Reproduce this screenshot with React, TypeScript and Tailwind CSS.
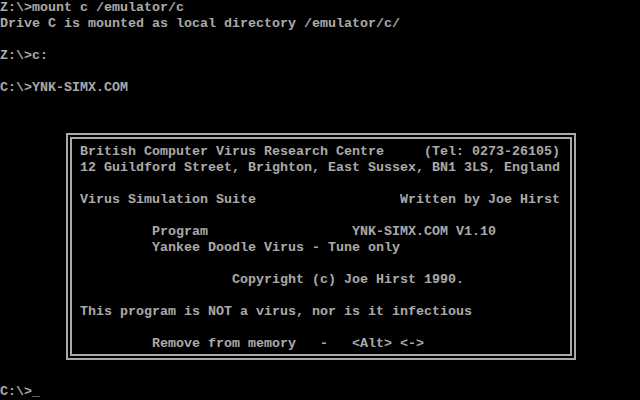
import React from "react";

const Row = ({ children }: { children?: React.ReactNode }) => (
  <div className="h-4 leading-4 whitespace-pre">{children ?? " "}</div>
);

export default function App() {
  const top = [
    "Z:\\>mount c /emulator/c",
    "Drive C is mounted as local directory /emulator/c/",
    "",
    "Z:\\>c:",
    "",
    "C:\\>YNK-SIMX.COM",
    "",
    "",
  ];
  const box = [
    "British Computer Virus Research Centre     (Tel: 0273-26105)",
    "12 Guildford Street, Brighton, East Sussex, BN1 3LS, England",
    "",
    "Virus Simulation Suite                  Written by Joe Hirst",
    "",
    "         Program                  YNK-SIMX.COM V1.10",
    "         Yankee Doodle Virus - Tune only",
    "",
    "                   Copyright (c) Joe Hirst 1990.",
    "",
    "This program is NOT a virus, nor is it infectious",
    "",
    "         Remove from memory   -   <Alt> <->",
  ];
  return (
    <div
      className="w-[640px] h-[400px] bg-black text-[#aaaaaa] overflow-hidden font-bold text-[13.333px]"
      style={{ fontFamily: '"Liberation Mono", "DejaVu Sans Mono", monospace' }}
    >
      {top.map((t, i) => (
        <Row key={i}>{t}</Row>
      ))}
      <div className="ml-[66px] mt-[5px] w-[510px] h-[227px] border-[6px] border-double border-[#aaaaaa] pl-2 pt-[5px]">
        {box.map((t, i) => (
          <Row key={i}>{t}</Row>
        ))}
      </div>
      <div className="mt-2">
        <Row />
        <Row>C:\&gt;_</Row>
      </div>
    </div>
  );
}
